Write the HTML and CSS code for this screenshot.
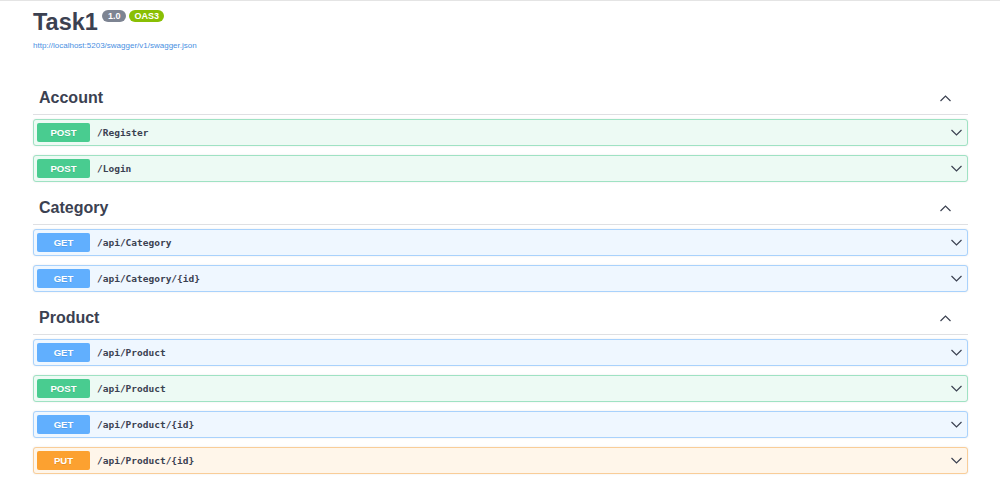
FILE: index.html
```html
<!DOCTYPE html>
<html lang="en">
<head>
<meta charset="utf-8">
<title>Swagger UI</title>
<link rel="stylesheet" href="styles.css">
</head>
<body>
<div class="topline"></div>
<div class="wrapper">
  <div class="info">
    <h2 class="title">Task1<span class="badge version">1.0</span><span class="badge oas">OAS3</span></h2>
    <a class="url" href="#">http://localhost:5203/swagger/v1/swagger.json</a>
  </div>

  <section class="tag-section">
    <h3 class="tag"><span>Account</span><svg class="chev" viewBox="0 0 13 13"><polyline points="1.5,9 6.5,4 11.5,9"/></svg></h3>
    <div class="op post"><span class="method">POST</span><span class="path">/Register</span><svg class="chev" viewBox="0 0 13 13"><polyline points="1.5,4 6.5,9 11.5,4"/></svg></div>
    <div class="op post"><span class="method">POST</span><span class="path">/Login</span><svg class="chev" viewBox="0 0 13 13"><polyline points="1.5,4 6.5,9 11.5,4"/></svg></div>
  </section>

  <section class="tag-section">
    <h3 class="tag"><span>Category</span><svg class="chev" viewBox="0 0 13 13"><polyline points="1.5,9 6.5,4 11.5,9"/></svg></h3>
    <div class="op get"><span class="method">GET</span><span class="path">/api/Category</span><svg class="chev" viewBox="0 0 13 13"><polyline points="1.5,4 6.5,9 11.5,4"/></svg></div>
    <div class="op get"><span class="method">GET</span><span class="path">/api/Category/{id}</span><svg class="chev" viewBox="0 0 13 13"><polyline points="1.5,4 6.5,9 11.5,4"/></svg></div>
  </section>

  <section class="tag-section">
    <h3 class="tag"><span>Product</span><svg class="chev" viewBox="0 0 13 13"><polyline points="1.5,9 6.5,4 11.5,9"/></svg></h3>
    <div class="op get"><span class="method">GET</span><span class="path">/api/Product</span><svg class="chev" viewBox="0 0 13 13"><polyline points="1.5,4 6.5,9 11.5,4"/></svg></div>
    <div class="op post"><span class="method">POST</span><span class="path">/api/Product</span><svg class="chev" viewBox="0 0 13 13"><polyline points="1.5,4 6.5,9 11.5,4"/></svg></div>
    <div class="op get"><span class="method">GET</span><span class="path">/api/Product/{id}</span><svg class="chev" viewBox="0 0 13 13"><polyline points="1.5,4 6.5,9 11.5,4"/></svg></div>
    <div class="op put"><span class="method">PUT</span><span class="path">/api/Product/{id}</span><svg class="chev" viewBox="0 0 13 13"><polyline points="1.5,4 6.5,9 11.5,4"/></svg></div>
  </section>
</div>
</body>
</html>
```

FILE: styles.css
```css
html, body {
  margin: 0;
  padding: 0;
  background: #fff;
  color: #3b4151;
  font-family: "Liberation Sans", Arial, sans-serif;
  overflow: hidden;
}

.topline {
  height: 1px;
  background: #e4e4e4;
}

.wrapper {
  padding: 0 32px 0 33px;
}

.info {
  padding-top: 7px;
  height: 80px;
  box-sizing: border-box;
}

.title {
  margin: 0;
  font-size: 23.5px;
  line-height: 28px;
  font-weight: bold;
  color: #3b4151;
  display: flex;
  align-items: flex-start;
}

.badge {
  display: inline-block;
  margin-top: 2px;
  margin-left: 4px;
  padding: 0 5px;
  height: 12px;
  line-height: 12px;
  border-radius: 6px;
  color: #fff;
  font-size: 9px;
  font-weight: bold;
}

.version {
  background: #7d8492;
  padding: 0 6px;
}

.badge.oas {
  margin-left: 3px;
  background: #89bf04;
}

.url {
  display: block;
  margin-top: 5px;
  font-size: 8px;
  line-height: 10px;
  color: #4990e2;
  text-decoration: none;
}

.tag-section {
  display: flex;
  flex-direction: column;
}

.tag {
  margin: 0 0 4px;
  padding: 7px 16px 6px 6px;
  height: 20px;
  line-height: 20px;
  font-size: 16px;
  font-weight: bold;
  color: #3b4151;
  border-bottom: 1px solid rgba(59, 65, 81, 0.16);
  display: flex;
  align-items: center;
  justify-content: space-between;
}

.chev {
  width: 13px;
  height: 13px;
  flex: none;
}

.chev polyline {
  fill: none;
  stroke: #3b4151;
  stroke-width: 1.2;
}

.op {
  display: flex;
  align-items: center;
  margin-bottom: 9px;
  padding: 3px 4px 3px 3px;
  border: 1px solid;
  border-radius: 3px;
  box-shadow: 0 0 2px rgba(0, 0, 0, 0.1);
}

.method {
  width: 53px;
  height: 19px;
  line-height: 19px;
  text-align: center;
  border-radius: 2px;
  color: #fff;
  font-size: 9.6px;
  font-weight: bold;
  text-shadow: 0 1px 0 rgba(0, 0, 0, 0.1);
  flex: none;
}

.path {
  flex: 1;
  padding-left: 7px;
  font-family: "DejaVu Sans Mono", "Liberation Mono", monospace;
  font-size: 9.5px;
  font-weight: bold;
  color: #3b4151;
}

.post {
  background: #edfaf4;
  border-color: #9fe2c3;
}
.post .method {
  background: #49cc90;
}

.get {
  background: #eff7ff;
  border-color: #a9d2fc;
}
.get .method {
  background: #61affe;
}

.put {
  background: #fff6ea;
  border-color: #f9cd98;
}
.put .method {
  background: #fca130;
}
```
